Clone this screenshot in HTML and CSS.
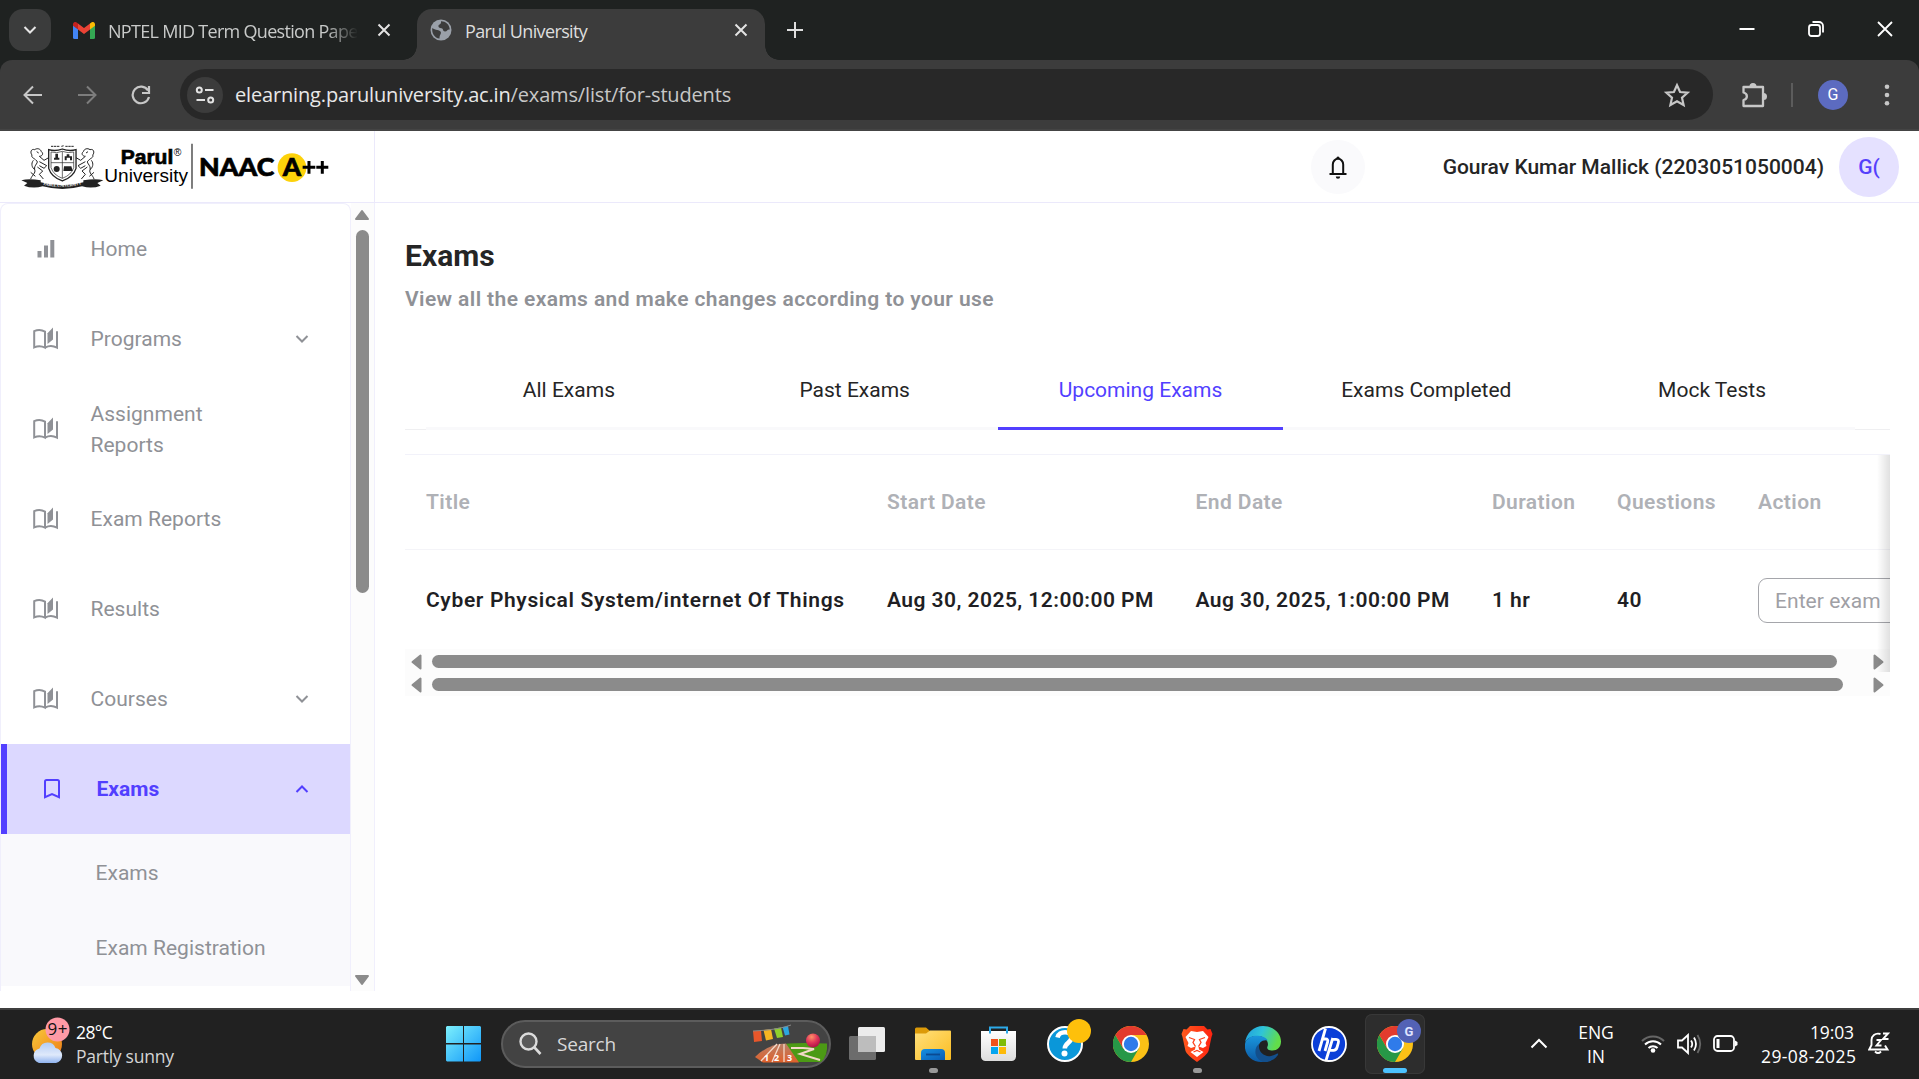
FILE: index.html
```html
<!DOCTYPE html>
<html lang="en">
<head>
<meta charset="utf-8">
<title>Parul University</title>
<link rel="stylesheet" href="styles.css">
</head>
<body>
<svg class="defs" width="0" height="0" aria-hidden="true">
  <defs>
    <symbol id="book" viewBox="0 0 26 24">
      <path d="M1.2 4.2C4.5 2.6 8.6 2.6 12 4.6V20.6C8.6 18.8 4.6 18.8 1.2 20.4ZM12 20.6C15.6 18.6 20.2 18.6 24 20.6V4.2" fill="none" stroke="currentColor" stroke-width="2"/>
      <path d="M14.5 6.2 20 .6V12.400L14.500 17Z" fill="currentColor"/>
    </symbol>
    <symbol id="chev" viewBox="0 0 14 10">
      <path d="M1.500 2 7 7.500 12.500 2" fill="none" stroke="currentColor" stroke-width="2"/>
    </symbol>
    <symbol id="x" viewBox="0 0 14 14">
      <path d="M1.500 1.500 12.500 12.500M12.500 1.500 1.500 12.500" fill="none" stroke="currentColor" stroke-width="2"/>
    </symbol>
    <symbol id="tri" viewBox="0 0 11 16">
      <path d="M9.500 1.600V14.400L1.500 8Z" fill="#8b8b8b" stroke="#8b8b8b" stroke-width="2" stroke-linejoin="round"/>
    </symbol>
    <symbol id="chrome" viewBox="0 0 36 36">
      <circle cx="18" cy="18" r="18" fill="#fbc116"/>
      <path d="M2.400 9A18 18 0 0 0 18 36L25.800 22.500H10.200Z" fill="#279847"/>
      <path d="M2.400 9A18 18 0 0 1 33.600 9H18L10.200 22.500Z" fill="#e33b2e"/>
      <circle cx="18" cy="18" r="9" fill="#fff"/>
      <circle cx="18" cy="18" r="7.200" fill="#2f7bea"/>
    </symbol>
    <linearGradient id="win" x1="0" y1="0" x2="1" y2="1"><stop offset="0" stop-color="#7df0fd"/><stop offset="1" stop-color="#0f96f8"/></linearGradient>
    <linearGradient id="sun" x1="0" y1="0" x2="1" y2="1"><stop offset="0" stop-color="#f8c93a"/><stop offset="1" stop-color="#ee7a16"/></linearGradient>
    <linearGradient id="cloud" x1="0" y1="0" x2="0" y2="1"><stop offset="0" stop-color="#b3cdf5"/><stop offset=".6" stop-color="#dfe9fb"/><stop offset="1" stop-color="#8fb3ef"/></linearGradient>
    <linearGradient id="fold" x1="0" y1="0" x2="1" y2="1"><stop offset="0" stop-color="#ffe07c"/><stop offset="1" stop-color="#fbbd22"/></linearGradient>
    <linearGradient id="bluef" x1="0" y1="0" x2="1" y2="1"><stop offset="0" stop-color="#1590e2"/><stop offset="1" stop-color="#0a5cb5"/></linearGradient>
    <linearGradient id="bag" x1="0" y1="0" x2="0" y2="1"><stop offset="0" stop-color="#fff"/><stop offset="1" stop-color="#dcdcdc"/></linearGradient>
    <linearGradient id="track" x1="0" y1="0" x2="0" y2="1"><stop offset="0" stop-color="#b98068"/><stop offset="1" stop-color="#e0602a"/></linearGradient>
    <linearGradient id="edgeA" x1="0" y1="0" x2="1" y2=".3"><stop offset="0" stop-color="#1f9be0"/><stop offset=".5" stop-color="#2fc4d8"/><stop offset="1" stop-color="#62dd4a"/></linearGradient>
    <linearGradient id="edgeB" x1="0" y1="0" x2="0" y2="1"><stop offset="0" stop-color="#1a96dd"/><stop offset="1" stop-color="#0c59a4"/></linearGradient>
    <linearGradient id="brave" x1="0" y1="0" x2="1" y2="0"><stop offset="0" stop-color="#ff5a1e"/><stop offset="1" stop-color="#ff2310"/></linearGradient>
    <radialGradient id="ball" cx=".4" cy=".25" r=".8"><stop offset="0" stop-color="#ff9266"/><stop offset=".5" stop-color="#e0365a"/><stop offset="1" stop-color="#a80d45"/></radialGradient>
  </defs>
</svg>

<div class="screen">
  <div class="tabstrip">
    <div class="tab-search"><svg width="14" height="10"><use href="#chev"/></svg></div>
    <div class="tab tab-mail">
      <svg class="gmail" width="22" height="17" viewBox="0 0 22 17">
        <path d="M0 3V15.500A1.500 1.500 0 0 0 1.500 17H5V6Z" fill="#4285f4"/>
        <path d="M22 3V15.500A1.500 1.500 0 0 1 20.500 17H17V6Z" fill="#34a853"/>
        <path d="M17 1.500V7.500L22 3.700V2.300C22 0 19.500-.7 18 .7Z" fill="#fbbc04"/>
        <path d="M5 1.500V7.500L11 12 17 7.500V1.500L11 6Z" fill="#ea4335"/>
        <path d="M5 1.500V7.500L0 3.700V2.300C0 0 2.500-.7 4 .7Z" fill="#c5221f"/>
      </svg>
      <span class="tab-title mail-title">NPTEL MID Term Question Pape</span>
      <svg class="tab-x" width="14" height="14"><use href="#x"/></svg>
    </div>
    <div class="tab tab-active">
      <svg width="22" height="22" viewBox="0 0 22 22">
        <circle cx="11" cy="11" r="10.500" fill="#9aa0a9"/>
        <path d="M11 2.200C15 2 19.500 5 19.800 10.500 17 10 17.500 12.500 15 12.500 12.500 12.500 13.500 9.500 11.500 9.300 9.500 9.200 8 8.500 8.500 6.500 9 5 11.500 5.500 11 2.200ZM2.300 9C5 11.500 10 10.500 10.800 13 11.500 15 9.500 15.500 9.500 19.600 4.500 19 1.500 14 2.300 9Z" fill="#3c3c3c"/>
      </svg>
      <span class="tab-title uni-title">Parul University</span>
      <svg class="tab-x" width="14" height="14"><use href="#x"/></svg>
    </div>
    <svg class="plus" width="16" height="16" viewBox="0 0 16 16"><path d="M8 0V16M0 8H16" stroke="#dedede" stroke-width="2"/></svg>
    <div class="win-controls">
      <svg width="16" height="16" viewBox="0 0 16 16"><path d="M.5 8H15.500" stroke="#fff" stroke-width="2"/></svg>
      <svg width="16" height="16" viewBox="0 0 16 16"><rect x="1" y="4" width="11" height="11" rx="2.500" fill="none" stroke="#fff" stroke-width="1.800"/><path d="M4.500 1H11A4 4 0 0 1 15 5V11.500" fill="none" stroke="#fff" stroke-width="1.800"/></svg>
      <svg width="16" height="16" viewBox="0 0 16 16"><path d="M1 1 15 15M15 1 1 15" stroke="#fff" stroke-width="1.800"/></svg>
    </div>
  </div>

  <div class="toolbar-wrap"><div class="toolbar">
    <svg class="nav-i" width="20" height="20" viewBox="0 0 20 20"><path d="M19 10H2M10 1.500 1.500 10 10 18.500" fill="none" stroke="#c7c7c7" stroke-width="2"/></svg>
    <svg class="nav-i" width="20" height="20" viewBox="0 0 20 20"><path d="M1 10H18M10 1.500 18.500 10 10 18.500" fill="none" stroke="#7d7d7d" stroke-width="2"/></svg>
    <svg class="nav-i" width="20" height="20" viewBox="0 0 20 20"><path d="M17 5.500A8.300 8.300 0 1 0 18 12M18 1V8H11" fill="none" stroke="#c7c7c7" stroke-width="2.200"/></svg>
    <div class="omnibox">
      <span class="site-info"><svg width="20" height="18" viewBox="0 0 20 18"><g fill="none" stroke="#e3e3e3" stroke-width="2"><circle cx="4.300" cy="4" r="2.500"/><path d="M10 4H18.500M1.500 14H10"/><circle cx="15.700" cy="14" r="2.500"/></g></svg></span>
      <span class="url"><b>elearning.paruluniversity.ac.in</b>/exams/list/for-students</span>
      <svg class="star" width="28" height="26" viewBox="0 0 28 26"><path d="M14 3.200 17.100 10 24.600 10.700 19 15.700 20.600 23 14 19.200 7.400 23 9 15.700 3.400 10.700 10.900 10Z" fill="none" stroke="#c7c7c7" stroke-width="2.200"/></svg>
    </div>
    <svg class="puzzle" width="27" height="26" viewBox="0 0 27 26"><path d="M2.500 5H22V24H2.500V18C7 17 7 11.500 2.500 10.500Z" fill="none" stroke="#c7c7c7" stroke-width="2.300" stroke-linejoin="round"/><path d="M8.500 4.500A3.500 3.500 0 0 1 15.500 4.500ZM22.500 11A3.500 3.500 0 0 1 22.500 18Z" fill="#c7c7c7"/></svg>
    <span class="tb-sep"></span>
    <span class="tb-avatar">G</span>
    <svg width="6" height="22" viewBox="0 0 6 22"><g fill="#c7c7c7"><circle cx="3" cy="2.800" r="2.300"/><circle cx="3" cy="11" r="2.300"/><circle cx="3" cy="19.200" r="2.300"/></g></svg>
  </div></div>

  <header class="site-header">
    <div class="brand">
      <svg width="310" height="46.667" viewBox="60 40 930 140">
        <g fill="none" stroke="#222" stroke-width="3">
          <path d="M146 60Q166 66 187 58Q208 66 228 60V116Q220 142 187 154Q154 142 146 116Z" stroke-width="4"/>
          <path d="M153 67Q170 72 187 65Q204 72 221 67V114Q214 136 187 146Q160 136 153 114Z" stroke-width="2"/>
          <path d="M153 99H221M187 66V146" stroke-width="2"/>
          <path d="M104 60C92 56 90 70 96 76 92 84 104 86 108 92 120 98 100 106 104 120 108 130 96 136 92 148M104 60C112 54 122 58 124 66 132 72 126 80 118 80L132 92 146 84M118 96 140 108 132 116 118 108M112 112 128 124 118 134 130 148M100 92C92 102 96 114 104 120M110 66 116 70M92 128 106 140"/>
          <path d="M270 60C282 56 284 70 278 76 282 84 270 86 266 92 254 98 274 106 270 120 266 130 278 136 282 148M270 60C262 54 252 58 250 66 242 72 248 80 256 80L242 92 228 84M256 96 234 108 242 116 256 108M262 112 246 124 256 134 244 148M274 92C282 102 278 114 270 120M264 66 258 70M282 128 268 140"/>
          <path d="M153 50H180M184 50 192 48M196 50H222" stroke-dasharray="7 2"/>
        </g>
        <g fill="#222">
          <path d="M64 152Q86 146 122 152V158Q187 176 250 158V152Q288 146 310 152L292 160 302 168Q276 178 246 170 187 186 128 170 98 178 72 168L82 160Z"/>
          <circle cx="170" cy="118" r="9"/><path d="M166 72H174V84H178V90H162V84H166ZM194 92V80H200V74H208V80H216V92H210V84H200V92ZM192 110H214L218 124H190Z"/>
        </g>
        <path id="ribbon" d="M130 165Q187 179 246 163" fill="none"/>
        <text class="ribbon-t"><textPath href="#ribbon" textLength="116">PARUL UNIVERSITY</textPath></text>
        <text class="parul" x="362" y="104" textLength="158" lengthAdjust="spacingAndGlyphs">Parul</text>
        <text class="reg" x="521" y="78">®</text>
        <text class="univ" x="313" y="158" textLength="251" lengthAdjust="spacingAndGlyphs">University</text>
        <path d="M576 42V177" stroke="#222" stroke-width="3.500"/>
        <circle cx="876" cy="114" r="43" fill="#fdd20a"/>
        <text class="naac" x="597" y="138" textLength="226" lengthAdjust="spacingAndGlyphs">NAAC</text>
        <text class="naac" x="848" y="138" textLength="55" lengthAdjust="spacingAndGlyphs">A</text>
        <path d="M908 113H946M927 94V132M949 113H985M967 94V132" stroke="#000" stroke-width="9"/>
      </svg>
    </div>
    <div class="user">
      <span class="bell"><svg width="18" height="24" viewBox="0 0 18 24"><path d="M3.800 19V9.500A5.200 5.700 0 0 1 14.200 9.500V19M.5 19H17.500" fill="none" stroke="#111" stroke-width="2"/><path d="M7.300 3.500A1.700 1.900 0 0 1 10.700 3.500ZM6.800 21.500H11.200A2.200 2.200 0 0 1 6.800 21.500Z" fill="#111"/></svg></span>
      <span class="user-name">Gourav Kumar Mallick (2203051050004)</span>
      <span class="user-avatar">G(</span>
    </div>
  </header>

  <div class="page">
    <aside class="side">
      <nav class="menu">
        <a class="item"><svg class="ico" width="26" height="24" viewBox="0 0 26 24"><path d="M4.500 14H8.500V20.500H4.500ZM11 8.500H15V20.500H11ZM17.300 3H21.300V20.500H17.300Z" fill="currentColor"/></svg><span>Home</span></a>
        <a class="item"><svg class="ico" width="26" height="24"><use href="#book"/></svg><span>Programs</span><svg class="chev" width="14" height="10"><use href="#chev"/></svg></a>
        <a class="item two"><svg class="ico" width="26" height="24"><use href="#book"/></svg><span>Assignment<br>Reports</span></a>
        <a class="item"><svg class="ico" width="26" height="24"><use href="#book"/></svg><span>Exam Reports</span></a>
        <a class="item"><svg class="ico" width="26" height="24"><use href="#book"/></svg><span>Results</span></a>
        <a class="item"><svg class="ico" width="26" height="24"><use href="#book"/></svg><span>Courses</span><svg class="chev" width="14" height="10"><use href="#chev"/></svg></a>
        <a class="item current"><svg class="ico" width="26" height="24" viewBox="0 0 26 24"><path d="M6 20.200V4.500A1.500 1.500 0 0 1 7.500 3H18.500A1.500 1.500 0 0 1 20 4.500V20.200L13 17.200Z" fill="none" stroke="currentColor" stroke-width="2"/></svg><span>Exams</span><svg class="chev up" width="14" height="10"><use href="#chev"/></svg></a>
        <div class="sub"><a>Exams</a><a>Exam Registration</a></div>
      </nav>
      <div class="vscroll">
        <svg width="16" height="12" viewBox="0 0 16 12"><path d="M8 2 14 10H2Z" fill="#8b8b8b" stroke="#8b8b8b" stroke-width="2" stroke-linejoin="round"/></svg>
        <span class="vthumb"></span>
        <svg class="down" width="16" height="12" viewBox="0 0 16 12"><path d="M8 10 14 2H2Z" fill="#8b8b8b" stroke="#8b8b8b" stroke-width="2" stroke-linejoin="round"/></svg>
      </div>
    </aside>
    <main class="main">
      <h1>Exams</h1>
      <p class="lead">View all the exams and make changes according to your use</p>
      <div class="tabs"><div class="tabs-in">
        <span>All Exams</span><span>Past Exams</span><span class="on">Upcoming Exams</span><span>Exams Completed</span><span>Mock Tests</span>
      </div></div>
      <div class="table">
        <div class="row head"><span>Title</span><span>Start Date</span><span>End Date</span><span>Duration</span><span>Questions</span><span>Action</span></div>
        <div class="row"><span class="name">Cyber Physical System/internet Of Things</span><span>Aug 30, 2025, 12:00:00 PM</span><span>Aug 30, 2025, 1:00:00 PM</span><span>1 hr</span><span>40</span><span class="enter">Enter exam</span></div>
        <div class="hscroll"><svg width="11" height="16"><use href="#tri"/></svg><span class="hthumb"></span><svg class="right" width="11" height="16"><use href="#tri"/></svg></div>
        <div class="fade"></div>
      </div>
      <div class="hscroll second"><svg width="11" height="16"><use href="#tri"/></svg><span class="hthumb"></span><svg class="right" width="11" height="16"><use href="#tri"/></svg></div>
    </main>
  </div>

  <footer class="taskbar">
    <div class="weather">
      <svg class="wx-icon" width="46" height="48" viewBox="0 0 46 48">
        <circle cx="17" cy="27" r="15" fill="url(#sun)"/>
        <path d="M9 46A7.500 7.500 0 0 1 9.500 31.500 8.500 8.500 0 0 1 25.500 31 7.600 7.600 0 0 1 26 46Z" fill="url(#cloud)"/>
        <circle cx="27.500" cy="12.500" r="12" fill="#ff9aa6"/>
        <text class="nine" x="17.500" y="18" textLength="20">9+</text>
      </svg>
      <div class="wx"><span>28°C</span><span class="dim">Partly sunny</span></div>
    </div>
    <svg class="start" width="35" height="36" viewBox="0 0 35 36"><path d="M1 0H17V17H0V1ZM18 0H34L35 1V17H18ZM0 18.500H17V35.500H1L0 34.500ZM18 18.500H35V34.500L34 35.500H18Z" fill="url(#win)"/></svg>
    <div class="search">
      <svg width="23" height="24" viewBox="0 0 23 24"><circle cx="9.500" cy="9.500" r="8" fill="#5a5a5a" stroke="#dcdcdc" stroke-width="2.400"/><path d="M15.500 15.500 21.500 22" stroke="#dcdcdc" stroke-width="2.600"/></svg>
      <span>Search</span>
      <svg class="art" width="76" height="40" viewBox="0 0 76 40">
        <path d="M26 21Q36 18 74 19.500 75 32 68 38H34Z" fill="#4c9a15"/>
        <path d="M2 33Q15 20 33 19.500L46 38.500H10Z" fill="url(#track)"/>
        <path d="M24 20 8 37M27 20 19 38M31 20 31 38" fill="none" stroke="#f3d9c8" stroke-width="1.300"/>
        <path d="M38 24H50L61 25 47 30 67 36" fill="none" stroke="#f3d9c8" stroke-width="2"/>
        <text class="tn" x="11" y="37">1</text><text class="tn" x="21" y="37">2</text><text class="tn" x="34" y="37">3</text>
        <path d="M0 7 8 6.500 9 17 1 18Z" fill="#e8572b"/><path d="M10.500 6 18 5 20 15 13 16.500Z" fill="#f6b522"/><path d="M21 4.500 28 3.500 30 13 24 14Z" fill="#8fcf2c"/><path d="M29.500 3 35 2 36.500 10.500 32 11.500Z" fill="#2ba7e0"/>
        <path d="M0 7Q25 6 38 1" fill="none" stroke="#888"/>
        <circle cx="60" cy="16.500" r="7" fill="url(#ball)"/>
      </svg>
    </div>
    <div class="apps">
      <span class="app"><svg width="36" height="36" viewBox="0 0 36 36"><rect x="9" y="1" width="27" height="25" rx="1.500" fill="#ececec"/><rect x="0" y="10" width="27" height="24" rx="1.500" fill="#6c6c6c"/><path d="M9 10H27V26H9Z" fill="#bdbdbd"/></svg></span>
      <span class="app run"><svg width="36" height="36" viewBox="0 0 36 36"><path d="M0 9V3A1.500 1.500 0 0 1 1.500 1.500H11L15 5H22V9Z" fill="#dc9a08"/><path d="M0 7.500H11L15 4.500H35A1 1 0 0 1 36 5.500V33A1 1 0 0 1 35 34H1A1 1 0 0 1 0 33Z" fill="url(#fold)"/><path d="M6 34V27A4 4 0 0 1 10 23H26A4 4 0 0 1 30 27V34Z" fill="url(#bluef)"/><path d="M11 28.500H25" stroke="#0a4a92" stroke-width="1.800"/></svg></span>
      <span class="app"><svg width="36" height="36" viewBox="0 0 36 36"><path d="M0 5H35V30.500A4.500 4.500 0 0 1 30.500 35H4.500A4.500 4.500 0 0 1 0 30.500Z" fill="url(#bag)"/><path d="M9 7.500V1.500H26V7.500" fill="none" stroke="#2ca9e8" stroke-width="2"/><path d="M10 13H17V20H10Z" fill="#f1511b"/><path d="M18 13H25V20H18Z" fill="#80bc06"/><path d="M10 21H17V28H10Z" fill="#04a5ef"/><path d="M18 21H25V28H18Z" fill="#fdba08"/></svg></span>
      <span class="app"><svg class="over" width="46" height="44" viewBox="0 -8 46 44"><circle cx="18" cy="18" r="17" fill="#0a97d9" stroke="#fff" stroke-width="2"/><path d="M10.500 11.500C12 4.500 24.500 4.500 24.500 11.500 24.500 16.500 17.800 17 17.800 22.500" fill="none" stroke="#fff" stroke-width="4.600"/><circle cx="17.500" cy="27.500" r="3" fill="#fff"/><circle cx="32" cy="5" r="12" fill="#fec00b"/></svg></span>
      <span class="app"><svg width="36" height="36"><use href="#chrome"/></svg></span>
      <span class="app run"><svg width="36" height="36" viewBox="0 0 36 36"><path d="M11 0H25L28.500 3.500 31.500 3 33.500 8 32.500 11 29.500 25Q28.500 28.500 18 36 7.500 28.500 6.500 25L3.500 11 2.500 8 4.500 3 7.500 3.500Z" fill="url(#brave)"/><path d="M18 6 24 5 29.500 11 26.500 17 27.500 20 24 22 19.500 20.500 20 23.500 24.500 26 18 31 11.500 26 16 23.500 16.500 20.500 12 22 8.500 20 9.500 17 6.500 11 12 5Z" fill="#fff"/><path d="M10 11.500 15.500 13.500 14 16.500 16.500 20.500M26 11.500 20.500 13.500 22 16.500 19.500 20.500M14.500 26 18 24.500 21.500 26" fill="none" stroke="#ff401a" stroke-width="1.300"/></svg></span>
      <span class="app"><svg width="36" height="36" viewBox="0 0 36 36"><path d="M0 17C1 7 9 0 18 0 29 0 36 7.500 36 15.500 36 21.500 32 24.500 27.500 24.500 23 24.500 21.500 22.500 22.500 20.500 24 17.500 22 11 14 10 7 9.300 1 12.500 0 17Z" fill="url(#edgeA)"/><path d="M0 18C1 12 7 9.500 13 9.800 20 10.200 23.500 14.500 22.300 14.500 17 13.500 13.500 17 13.500 21.500 13.500 28.500 20 35 23.500 34.800 9 39.500-1.500 29 0 18Z" fill="url(#edgeB)"/><path d="M14.500 17.500C12 25 19 31.500 26 30 30 29.200 32 27 33 27.500 34.500 28.200 28 36.500 19 36 9 34 8 22 14.500 17.500Z" fill="#134f8c"/></svg></span>
      <span class="app"><svg width="36" height="36" viewBox="0 0 36 36"><circle cx="18" cy="18" r="17" fill="#0b3fd8" stroke="#fff" stroke-width="1.800"/><path d="M14.500 2.500 8 25M11.800 13H14.500Q17.500 13 16.600 16L14 25M21.800 12 15 34.500M20.500 13.300H25Q28.300 13.300 27.300 17L26 21.500Q25.200 24.300 22.500 24.300H19" fill="none" stroke="#fff" stroke-width="2.800"/></svg></span>
      <span class="app active"><svg class="over2" width="48" height="44" viewBox="0 -8 48 44"><use href="#chrome" width="36" height="36"/><circle cx="32" cy="5" r="12" fill="#5362b5"/><text class="bg" x="27.500" y="10">G</text></svg></span>
    </div>
    <div class="tray">
      <svg width="18" height="11" viewBox="0 0 18 11"><path d="M1.500 9.500 9 2 16.500 9.500" fill="none" stroke="#fff" stroke-width="2"/></svg>
      <div class="lang"><span>ENG</span><span>IN</span></div>
      <svg class="wifi" width="24" height="20" viewBox="0 0 24 20"><g fill="none" stroke-width="2"><path d="M1 7A15.500 15.500 0 0 1 23 7" stroke="#666"/><path d="M4 10.500A11.500 11.500 0 0 1 20 10.500M7.500 14A6.500 6.500 0 0 1 16.500 14" stroke="#fff"/></g><circle cx="12" cy="16.500" r="2.300" fill="#fff"/></svg>
      <svg class="vol" width="25" height="22" viewBox="0 0 25 22"><g fill="none" stroke="#fff" stroke-width="1.800"><path d="M1 7.500H5L11 2V20L5 14.500H1ZM14 7.500Q16.500 11 14 14.500M17 4.500Q21 11 17 17.500"/><path d="M20.500 2Q26 11 20.500 20" stroke="#666"/></g></svg>
      <svg class="bat" width="25" height="17" viewBox="0 0 25 17"><rect x="1" y="1" width="20" height="15" rx="3.500" fill="none" stroke="#fff" stroke-width="1.800"/><path d="M3.500 4H6.500V13H3.500ZM22 5.500 24.500 7V10L22 11.500Z" fill="#fff"/></svg>
      <div class="clock"><span>19:03</span><span>29-08-2025</span></div>
      <svg class="zz" width="22" height="23" viewBox="0 0 22 23"><path d="M12.500 2C7 .5 3.500 4 3.500 8V13L1.200 17.500H19.500L17 13.500M7 19.500Q10 22.500 13 19.500M8.500 8H13L8.500 13.500H13.500M15 1.500H20L15 7H20.500" fill="none" stroke="#fff" stroke-width="1.900"/></svg>
    </div>
  </footer>
</div>
</body>
</html>
```
FILE: styles.css
```css
* { box-sizing: border-box; }
body { margin: 0; background: #fff; font-family: Roboto, "Liberation Sans", sans-serif; font-size: 21px; }
.defs { position: absolute; }
svg { display: block; flex: none; }
.screen { width: 1919px; height: 1079px; display: flex; flex-direction: column; overflow: hidden; }

/* browser tabs */
.tabstrip { height: 60px; flex: none; background: #1f2221; display: flex; align-items: flex-start; font-family: "Open Sans", "Noto Sans", sans-serif; color: #dedede; }
.tab-search { margin: 9px 0 0 9px; width: 42px; height: 42px; border-radius: 14px; background: #3b3c3c; display: flex; align-items: center; justify-content: center; color: #e6e6e6; }
.tab { height: 51px; margin-top: 9px; display: flex; align-items: center; padding-bottom: 9px; }
.tab-mail { margin-left: 22px; width: 344px; color: #c9cbca; }
.tab-title { white-space: nowrap; font-size: 18px; padding-top: 2px; }
.mail-title { margin-left: 13px; width: 250px; -webkit-mask-image: linear-gradient(90deg, #000 87%, transparent); mask-image: linear-gradient(90deg, #000 87%, transparent); letter-spacing: -.7px; }
.tab-mail .tab-x { margin-left: 19px; }
.tab-x { color: #e3e3e3; }
.tab-active { position: relative; width: 348px; background: #3c3c3c; border-radius: 15px 15px 0 0; padding-left: 13px; padding-right: 17px; }
.tab-active::before, .tab-active::after { content: ""; position: absolute; bottom: 0; width: 14px; height: 14px; }
.tab-active::before { left: -14px; background: radial-gradient(circle at 0 0, transparent 13.5px, #3c3c3c 14px); }
.tab-active::after { right: -14px; background: radial-gradient(circle at 100% 0, transparent 13.5px, #3c3c3c 14px); }
.uni-title { margin-left: 13px; letter-spacing: -.62px; }
.tab-active .tab-x { margin-left: auto; }
.plus { margin: 22px 0 0 22px; }
.win-controls { margin: 21px 26px 0 auto; display: flex; gap: 53px; }

/* address bar */
.toolbar-wrap { height: 71px; flex: none; background: #1f2221; }
.toolbar { height: 71px; background: #3c3c3c; border-radius: 12px 12px 0 0; border-bottom: 2px solid #444; display: flex; align-items: center; padding: 0 29px 0 23px; }
.nav-i { margin-right: 34px; }
.omnibox { margin-left: -5px; width: 1533px; height: 51px; border-radius: 26px; background: #282828; display: flex; align-items: center; padding: 0 22px 0 7px; }
.site-info { width: 36px; height: 36px; border-radius: 50%; background: #3c3c3c; display: flex; align-items: center; justify-content: center; }
.url { margin-left: 12px; font: 20px "Open Sans", "Noto Sans", sans-serif; letter-spacing: -.16px; color: #c7c7c7; }
.url b { font-weight: 400; color: #e8e8e8; }
.star { margin-left: auto; }
.puzzle { margin-left: 28px; }
.tb-sep { width: 2px; height: 24px; background: #5c5c5c; margin-left: 23px; }
.tb-avatar { width: 30px; height: 30px; border-radius: 50%; background: #5c6bc0; color: #fff; font-size: 16px; display: flex; align-items: center; justify-content: center; margin: 0 auto 0 25px; }

/* site header */
.site-header { height: 72px; flex: none; border-bottom: 1px solid #ebe9fb; display: flex; }
.brand { width: 375px; border-right: 1px solid #ebe9fb; padding: 12px 0 0 20px; }
.ribbon-t { font: 700 13px "Liberation Serif", serif; fill: #fff; }
.parul { font: 700 59px "Liberation Sans", sans-serif; stroke: #000; stroke-width: 2; }
.reg { font: 31px "Liberation Sans", sans-serif; }
.univ { font: 56px "Liberation Sans", sans-serif; }
.naac { font: 900 74px Lato, sans-serif; stroke: #000; stroke-width: 2; }
.user { flex: 1; display: flex; align-items: center; justify-content: flex-end; padding-right: 20px; }
.bell { width: 54px; height: 54px; border-radius: 50%; background: #fafafc; display: flex; align-items: center; justify-content: center; margin-right: 78px; }
.user-name { font-weight: 500; color: #252525; white-space: nowrap; }
.user-avatar { margin-left: 15px; width: 60px; height: 60px; border-radius: 50%; background: #e5e1ff; color: #5540fb; font-weight: 500; display: flex; align-items: center; justify-content: center; }

/* sidebar */
.page { flex: 1; display: flex; min-height: 0; background: #fff; }
.side { width: 375px; height: 788px; display: flex; border-right: 1px solid #f0effc; }
.menu { width: 351px; border-left: 1px solid #f0effc; border-right: 1px solid #f0effc; border-top: 1px solid #f0effc; border-radius: 8px 8px 0 0; color: #8f9196; letter-spacing: .02px; }
.item { height: 90px; display: flex; align-items: center; padding-left: 32px; padding-right: 41px; line-height: 31px; }
.item span { margin-left: 31.5px; flex: 1; }
.two span { padding-top: 2px; }
.current { background: #dcd8ff; border-left: 6px solid #523fff; color: #523fff; font-weight: 700; }
.current .ico { margin-left: -.5px; margin-right: .5px; }
.up { transform: scaleY(-1); }
.sub { height: 152px; background: #f9f9fc; padding: 2px 0 0 94.5px; display: flex; flex-direction: column; }
.sub a { height: 75px; line-height: 75px; }
.vscroll { flex: 1; background: #fcfcfc; display: flex; flex-direction: column; align-items: center; padding: 6px 1px 5px 0; }
.vthumb { width: 13px; height: 363px; border-radius: 7px; background: #8b8b8b; margin-top: 9px; }
.down { margin-top: auto; }

/* exams page */
.main { flex: 1; padding: 33px 29px 0 30px; min-width: 0; }
h1 { margin: 0; font-size: 30px; line-height: 40px; font-weight: 700; color: #252525; }
.lead { margin: 8px 0 0; font-weight: 600; line-height: 30px; color: #8f9196; letter-spacing: .4px; }
.tabs { margin-top: 36px; height: 80px; border-bottom: 1px solid #efeff1; display: flex; padding: 0 35px 0 21px; }
.tabs-in { flex: 1; height: 80px; display: grid; grid-template-columns: repeat(5, 1fr); border-bottom: 3px solid #f9f9fb; text-align: center; color: #252525; line-height: 80px; }
.tabs-in .on { color: #523fff; border-bottom: 3px solid #523fff; height: 80px; }
.table { position: relative; margin-top: 24px; height: 218px; overflow: hidden; border-top: 1px solid #f2f2fa; }
.row { width: 1560px; display: grid; grid-template-columns: 461px 308.500px 296.500px 125px 141px 220px; padding-left: 21px; height: 99px; align-items: center; font-weight: 600; color: #1f1f24; letter-spacing: .45px; white-space: nowrap; }
.name { letter-spacing: .64px; }
.head { height: 95px; border-bottom: 1px solid #f4f4f8; color: #afb1b6; letter-spacing: .42px; }
.enter { height: 45px; margin-top: 2px; border: 1px solid #a5a6ab; border-radius: 9px; padding-left: 16px; line-height: 45px; color: #9fa0a5; font-weight: 400; letter-spacing: .05px; }
.hscroll { height: 24px; background: #fcfcfc; display: flex; align-items: center; padding: 0 6px; }
.hthumb { width: 1405px; height: 13px; border-radius: 7px; background: #8b8b8b; margin-left: 10px; }
.second .hthumb { width: 1411px; }
.hscroll svg { margin-top: 1px; }
.right { margin-left: auto; transform: scaleX(-1); }
.fade { position: absolute; top: 0; right: 0; width: 13px; height: 218px; background: linear-gradient(90deg, rgba(0,0,0,0), rgba(0,0,0,.12)); }

/* desktop taskbar */
.taskbar { height: 71px; flex: none; background: #212121; border-top: 2px solid #3f3f3f; display: flex; align-items: center; padding-bottom: 2px; font-family: "Open Sans", "Noto Sans", sans-serif; font-size: 17.5px; color: #fff; }
.weather { width: 446px; padding-left: 30px; display: flex; align-items: center; }
.wx-icon { margin-top: -6px; }
.nine { font: 17px "Open Sans", sans-serif; fill: #111; }
.wx, .lang, .clock { display: flex; flex-direction: column; line-height: 24px; white-space: nowrap; }
.wx { letter-spacing: -.25px; }
.wx span:first-child { letter-spacing: -.6px; }
.dim { color: #d5d5d5; }
.search { margin-left: 20px; width: 330px; height: 48px; border-radius: 24px; border: 2px solid #5c5c5c; background: #434343; display: flex; align-items: center; padding: 0 0 0 16px; font-size: 19px; color: #d8d8d8; letter-spacing: -.2px; }
.search span { margin-left: 15px; }
.art { margin-left: auto; }
.tn { font: 700 9px "Open Sans", sans-serif; fill: #fff; }
.apps { margin-left: 6px; display: flex; gap: 6px; }
.app { position: relative; width: 60px; height: 60px; border-radius: 7px; display: flex; align-items: center; justify-content: center; }
.over { margin: -8px -10px 0 0; }
.over2 { margin: -8px -12px 0 0; }
.bg { font: 700 13px Roboto, sans-serif; fill: #dfe3ff; }
.run::after, .active::after { content: ""; position: absolute; bottom: 1px; left: 26px; width: 9px; height: 5px; border-radius: 3px; background: #999; }
.active { background: #2d2d2d; box-shadow: inset 0 0 0 1px #383838; }
.active::after { left: 18px; width: 24px; background: #4cc2ff; }
.tray { margin-left: auto; display: flex; align-items: center; padding-right: 29px; }
.lang { width: 60px; text-align: center; margin-left: 18px; letter-spacing: -.1px; }
.wifi { margin-left: 15px; }
.vol { margin-left: 12px; }
.bat { margin-left: 11px; }
.clock { margin-left: 23px; text-align: right; width: 93px; letter-spacing: .4px; }
.clock span:first-child { letter-spacing: -.1px; }
.zz { margin-left: 14px; }
```
